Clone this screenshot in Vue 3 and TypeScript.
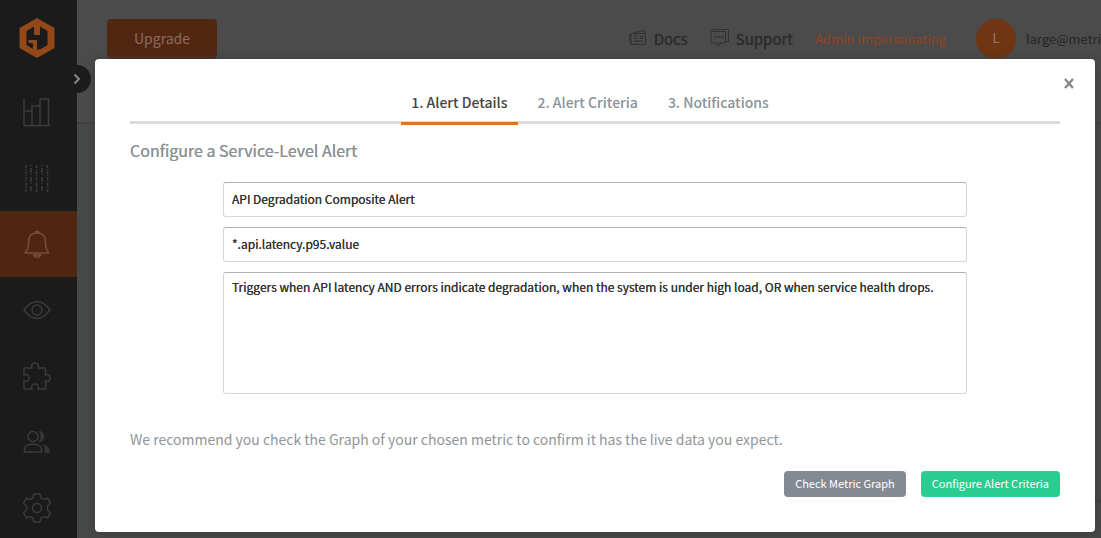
<script setup lang="ts">
import { ref } from 'vue'

const steps = ['1. Alert Details', '2. Alert Criteria', '3. Notifications']
const active = ref(0)
const alertName = ref('API Degradation Composite Alert')
const metric = ref('*.api.latency.p95.value')
const description = ref(
  'Triggers when API latency AND errors indicate degradation, when the system is under high load, OR when service health drops.'
)
</script>

<template>
  <div class="page">
    <nav class="sidebar" aria-label="Main">
      <a class="logo" href="#" aria-label="Home">
        <svg width="36" height="42" viewBox="0 0 36 42">
          <path fill="#924818" fill-rule="evenodd" d="M18 1 35.500 11V31L18 41 .5 31V11ZM15 9.500 7.500 14V28L14 32V26.500L9.500 25.500V23H18V32.500L21 32.500 28.500 28V14L21 9.500V18H15Z" />
        </svg>
      </a>
      <a class="item" href="#" aria-label="Dashboards">
        <svg width="28" height="30" viewBox="0 0 28 30">
          <path d="M1 1V28.500H27.500M2 14H9V28M9 28V9H17V28M17 28V2H25.500V28" />
        </svg>
      </a>
      <a class="item" href="#" aria-label="Metrics">
        <svg width="26" height="28" viewBox="0 0 26 28">
          <path stroke-dasharray="3 1 1 1" d="M2 1V28M12.500 1V28M23.500 1V28" />
          <path stroke-dasharray="1 2 5 1" d="M7 1V28M18 1V28" />
        </svg>
      </a>
      <a class="item current" href="#" aria-label="Alerts">
        <svg width="26" height="28" viewBox="0 0 26 28">
          <path d="M1.500 22C4 20 4.500 18 4.500 12C4.500 6 8 3 13 3S21.500 6 21.500 12C21.500 18 22 20 24.500 22V23H1.500ZM11 3C11 .5 15 .5 15 3M9.500 25C10 28 16 28 16.500 25Z" />
        </svg>
      </a>
      <a class="item" href="#" aria-label="Watch">
        <svg width="28" height="20" viewBox="0 0 28 20">
          <path d="M1 10Q14-7 27 10Q14 27 1 10Z" /><circle cx="14" cy="10" r="5" />
        </svg>
      </a>
      <a class="item" href="#" aria-label="Add-ons">
        <svg width="28" height="28" viewBox="0 0 28 28">
          <path d="M1 6H9C8 3 9 1 12 1S16 3 15 6H22.500V13C25 12 27 13 27 16S25 20 22.500 19V27H15C16 24 15 22 12 22S8 24 9 27H1V19C4 20 6 19 6 16S4 12 1 13Z" />
        </svg>
      </a>
      <a class="item" href="#" aria-label="Team">
        <svg width="28" height="24" viewBox="0 0 28 24">
          <circle cx="10" cy="6.500" r="5" />
          <path d="M1.500 22V19C1.500 12.500 18.500 12.500 18.500 19V22Z" />
          <path class="solid" d="M16 1C23 1 23 12 16 12Q19 6.500 16 1ZM20 14Q27 16 27 23H21.500Q22 17 20 14Z" />
        </svg>
      </a>
      <a class="item" href="#" aria-label="Settings">
        <svg width="28" height="30" viewBox="0 0 28 30">
          <path d="M11 1H17L18 5 21 6.500 24.500 5 27.500 10 24.500 13V17L27.500 20 24.500 25 21 23.500 18 25 17 29H11L10 25 7 23.500 3.500 25 .5 20 3.500 17V13L.5 10 3.500 5 7 6.500 10 5Z" />
          <circle cx="14" cy="15" r="4.500" />
        </svg>
      </a>
      <button class="expand" type="button" aria-label="Expand menu">
        <svg width="8" height="12" viewBox="0 0 8 12"><path d="M1.500 1.500 6 6 1.500 10.500" /></svg>
      </button>
    </nav>

    <div class="content">
      <header class="topbar">
        <button class="upgrade" type="button">Upgrade</button>
        <div class="tools">
          <a class="tool" href="#">
            <svg width="19" height="16" viewBox="0 0 19 16">
              <path d="M3 3.500H17.500V14.500H3ZM3 14.500 1 5H3M5 3 16 .5 17 3.500M5.500 6H10M5.500 8.500H10M5.500 11H15M12 6H15V8.500H12Z" />
            </svg>
            Docs
          </a>
          <a class="tool" href="#">
            <svg width="19" height="18" viewBox="0 0 19 18">
              <path d="M1 2.500H15.500V14H10L8 17 6.500 14H1ZM3 2.500V.5H18.500V12.500H15.500" />
              <path stroke-width="2" stroke-dasharray="2 1.500" d="M4 8H13" />
            </svg>
            Support
          </a>
          <span class="impersonating">Admin impersonating</span>
          <a class="account" href="#"><span class="avatar">L</span>large@metric</a>
        </div>
      </header>
      <main class="body"></main>
    </div>

    <section class="modal" role="dialog" aria-modal="true" aria-labelledby="title">
      <button class="close" type="button" aria-label="Close">
        <svg width="10" height="11" viewBox="0 0 10 11"><path d="M1 1 9 10M9 1 1 10" /></svg>
      </button>
      <div class="tabs" role="tablist">
        <button
          v-for="(step, i) in steps"
          :key="step"
          class="tab"
          :class="{ selected: i === active }"
          type="button"
          role="tab"
          :aria-selected="i === active"
          @click="active = i"
        >{{ step }}</button>
      </div>
      <h1 id="title">Configure a Service-Level Alert</h1>
      <form class="fields" @submit.prevent>
        <input v-model="alertName" type="text" aria-label="Alert name" />
        <input v-model="metric" type="text" aria-label="Metric" />
        <textarea v-model="description" aria-label="Description"></textarea>
      </form>
      <p class="hint">We recommend you check the Graph of your chosen metric to confirm it has the live data you expect.</p>
      <div class="actions">
        <button class="btn" type="button">Check Metric Graph</button>
        <button class="btn primary" type="button">Configure Alert Criteria</button>
      </div>
    </section>
  </div>
</template>

<style>
body {
  margin: 0;
  background: #474848;
}
</style>

<style scoped>
* {
  box-sizing: border-box;
}
.page {
  display: flex;
  min-height: 100vh;
  overflow: hidden;
  font-family: "Noto Sans CJK SC", "Noto Sans", sans-serif;
  font-size: 14px;
}
button, input, textarea {
  font: inherit;
}
button {
  border: 0;
  padding: 0;
  cursor: pointer;
}
a {
  color: inherit;
  text-decoration: none;
}
svg {
  display: block;
  fill: none;
}
.sidebar {
  position: relative;
  flex: none;
  width: 77px;
  background: #1b1b1b;
}
.logo, .item {
  display: flex;
  align-items: center;
  justify-content: center;
  height: 66px;
  padding-right: 3px;
}
.logo {
  height: 79px;
  padding-bottom: 3px;
}
.item svg {
  stroke: #383c3d;
  stroke-width: 1.500;
}
.item .solid {
  fill: #333737;
  stroke: none;
}
.item.current {
  background: #4e2611;
}
.item.current svg {
  stroke: #76503d;
}
.expand {
  position: absolute;
  top: 65px;
  right: -14px;
  display: flex;
  align-items: center;
  justify-content: center;
  width: 28px;
  height: 28px;
  border-radius: 50%;
  background: #1b1b1b;
}
.expand svg {
  stroke: #898989;
  stroke-width: 2;
}
.content {
  display: flex;
  flex: 1;
  flex-direction: column;
  min-width: 0;
  background: #474848;
}
.topbar {
  display: flex;
  align-items: flex-start;
  justify-content: space-between;
  height: 124px;
  padding: 19px 0 0 30px;
  background: #4b4b4b;
  border-bottom: 2px solid #404141;
  white-space: nowrap;
}
.body {
  height: 378px;
  margin-left: 30px;
  border-bottom: 2px solid #404141;
}
.upgrade {
  width: 110px;
  height: 40px;
  padding-bottom: 2px;
  border-radius: 4px;
  background: #522711;
  color: #8a6d5f;
}
.tools {
  display: flex;
  align-items: center;
  height: 40px;
}
.tool {
  display: flex;
  align-items: center;
  gap: 7px;
  margin-right: 22px;
  padding-bottom: 2px;
  color: #292b2c;
  font-size: 15px;
  text-shadow: 0 0 0 currentColor;
}
.tool svg {
  stroke: #303233;
}
.impersonating {
  padding-bottom: 2px;
  color: #92441f;
  font-size: 13px;
}
.account {
  display: flex;
  align-items: center;
  gap: 10px;
  width: 125px;
  margin-left: 30px;
  color: #242627;
  font-size: 13px;
  line-height: 38px;
}
.avatar {
  flex: none;
  width: 40px;
  height: 40px;
  border-radius: 50%;
  background: #703512;
  color: #9a7a62;
  text-align: center;
}
.modal {
  position: absolute;
  top: 59px;
  left: 95px;
  right: 6px;
  padding: 32px 35px 35px;
  border-radius: 4px;
  background: #fff;
  box-shadow: 0 1px 8px #3a3a3a;
}
.close {
  position: absolute;
  top: 19px;
  right: 21px;
  background: none;
}
.close svg {
  stroke: #848b8f;
  stroke-width: 2.500;
}
.tabs {
  display: flex;
  justify-content: center;
  gap: 10px;
  height: 33px;
  padding-right: 10px;
  border-bottom: 3px solid #dadbdb;
}
.tab {
  height: 34px;
  padding: 0 10px 9px;
  border-bottom: 3px solid transparent;
  background: none;
  color: #8b9296;
  font-size: 14px;
  font-weight: 500;
  line-height: 22px;
}
.tab.selected {
  border-color: #d6772a;
  color: #424546;
}
h1 {
  margin: 14px 0 20px;
  color: #8b9296;
  font-size: 16px;
  font-weight: 400;
  line-height: 24px;
  text-shadow: 0 0 0 currentColor;
}
.fields {
  display: flex;
  flex-direction: column;
  gap: 10px;
  width: 80%;
  margin: 0 auto;
}
input, textarea {
  width: 100%;
  height: 35px;
  padding: 0 8px 2px;
  border: 1px solid #d5d6d6;
  border-top-color: #b0b2b2;
  border-radius: 3px;
  background: #fff;
  color: #333435;
  font-size: 12px;
  text-shadow: 0 0 0 currentColor;
  resize: none;
}
textarea {
  display: block;
  height: 122px;
  padding-top: 5px;
  line-height: 18px;
}
.hint {
  margin: 34px 0 21px;
  color: #8f969a;
  line-height: 22px;
}
.actions {
  display: flex;
  justify-content: flex-end;
  gap: 15px;
}
.btn {
  height: 26px;
  padding: 0 11px 2px;
  border-radius: 4px;
  background: #858a92;
  color: #fff;
  font-size: 11px;
}
.btn.primary {
  background: #2bcc91;
}
</style>
